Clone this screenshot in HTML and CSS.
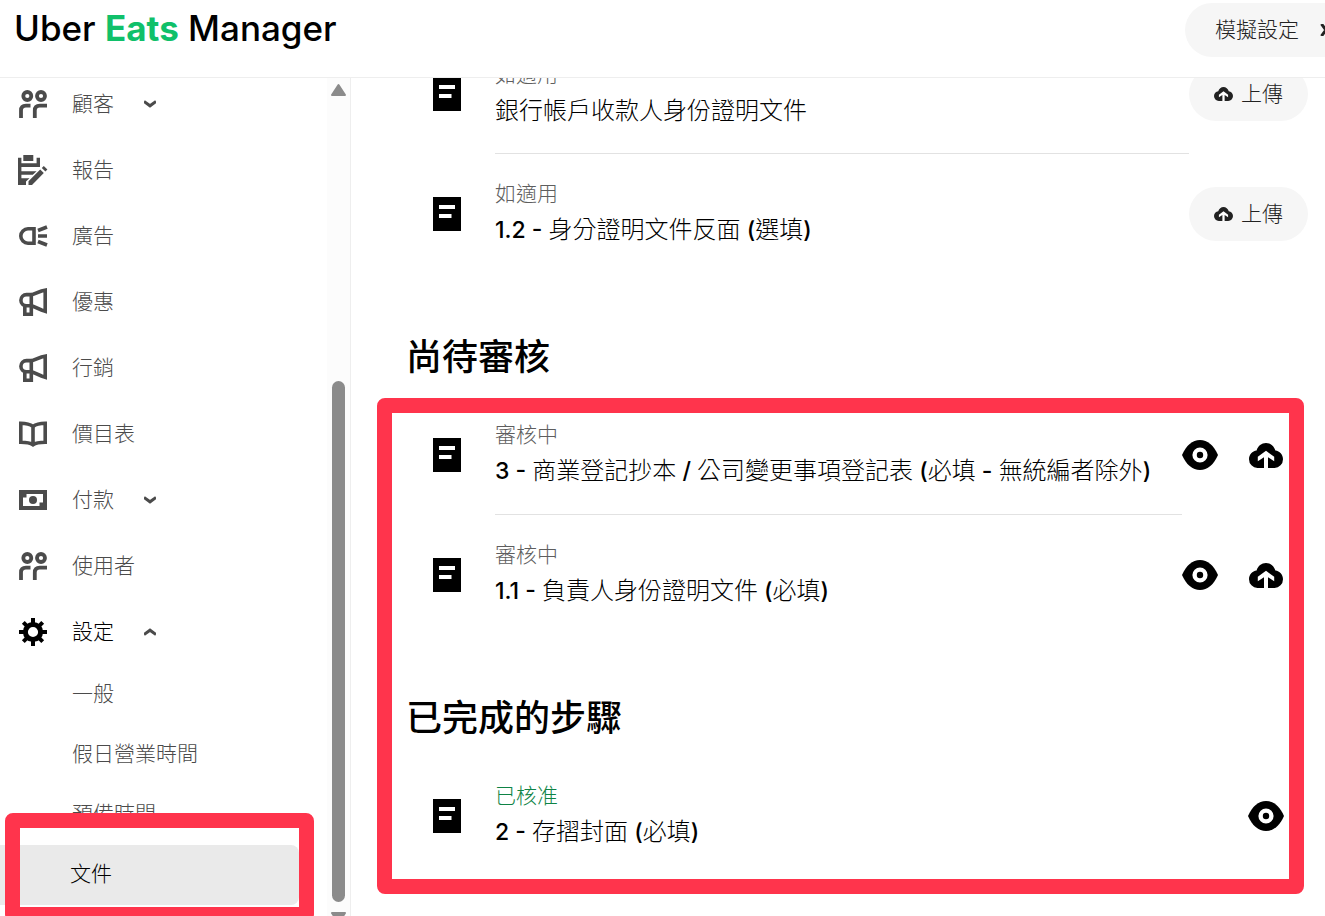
FILE: index.html
```html
<!DOCTYPE html>
<html lang="zh-Hant">
  <head>
    <meta charset="UTF-8" />
    <meta name="viewport" content="width=device-width, initial-scale=1.0" />
    <title>Uber Eats Manager</title>
    <link rel="stylesheet" href="styles.css">
  </head>
  <body>
    <!-- shared icons -->
    <svg class="sprite" aria-hidden="true">
      <symbol id="people" viewBox="0 0 28 28">
        <g fill="none" stroke="currentColor" stroke-width="3.8">
          <circle cx="8.3" cy="6" r="4" />
          <circle cx="22" cy="6" r="4" />
          <path d="M2 28v-7.5q0-4.8 5-4.8h4.5M15.8 28v-7.5q0-4.8 5-4.8H28" />
        </g>
      </symbol>
      <symbol id="megaphone" viewBox="0 0 28 28">
        <path fill="none" stroke="currentColor" stroke-width="3.6" d="M26.2 2.2v21L22.5 22 13 17.8H7.5a5.6 5.6 0 0 1 0-11.2H13L22.5 3zM12.3 6.6v19.6H5.8v-8.6" />
      </symbol>
      <symbol id="chevron" viewBox="0 0 12 8">
        <path fill="none" stroke="currentColor" stroke-width="3" d="M0 1.5l6 4.3 6-4.3" />
      </symbol>
      <symbol id="doc" viewBox="0 0 28 34">
        <path fill="currentColor" d="M0 0h28v34H0z" />
        <path fill="#fff" d="M6 8h16v4H6zM6 17h12.5v4H6z" />
      </symbol>
      <symbol id="eye" viewBox="0 0 36 30">
        <path fill="currentColor" d="M0 15C4 5.5 10.500 0 18 0s14 5.500 18 15c-4 9.500-10.500 15-18 15S4 24.500 0 15z" />
        <circle cx="18" cy="15" r="5.4" fill="none" stroke="#fff" stroke-width="4.400" />
      </symbol>
      <symbol id="cloud" viewBox="0 0 34 25">
        <path fill="currentColor" d="M8.500 25A8.800 8.800 0 0 1 0 16.200C0 11.500 3.400 8 7.600 7.400 9 3 12.600 0 17 0s8 3 9.400 7.400C30.600 8 34 11.500 34 16.200A8.800 8.800 0 0 1 25.500 25z" />
        <path class="cloud-arrow" d="M17 7.800l8.200 6v4.400L19 14.300V25h-4V14.300l-6.200 3.900v-4.400z" />
      </symbol>
    </svg>

    <header class="header">
      <a class="logo" href="#">Uber <b>Eats</b> Manager</a>
      <button class="simulate" type="button">
        <span>模擬設定</span>
        <svg class="chevron right"><use href="#chevron" /></svg>
      </button>
    </header>

    <div class="layout">
      <aside class="sidebar">
        <nav class="nav">
          <button class="nav-item" type="button">
            <svg class="nav-icon"><use href="#people" /></svg>
            <span>顧客</span>
            <svg class="chevron"><use href="#chevron" /></svg>
          </button>
          <a class="nav-item" href="#">
            <svg class="nav-icon" viewBox="0 0 28 28">
              <g fill="currentColor">
                <path d="M4.300-1h10v6h-10z" />
                <path d="M-1 1.700h3.400v5.600h15.200V1.700H21V11H2.400v4.200h15.200l-3.800 3.500H2.400v3.600h8.100L7 25.500V29h-8z" />
                <path d="M9.500 29v-3.800L21.200 13.500l3.600 3.600L13 29zM22.800 12l2-2 3.600 3.600-2 2z" />
              </g>
            </svg>
            <span>報告</span>
          </a>
          <a class="nav-item" href="#">
            <svg class="nav-icon" viewBox="0 0 28 28">
              <path fill="none" stroke="currentColor" stroke-width="3.600" d="M15 6.800v14.400H9A7.200 7.200 0 0 1 9 6.800zM19 8.500l9-3.500M19 14h9M19 19.500l9 3.500" />
            </svg>
            <span>廣告</span>
          </a>
          <a class="nav-item" href="#">
            <svg class="nav-icon"><use href="#megaphone" /></svg>
            <span>優惠</span>
          </a>
          <a class="nav-item" href="#">
            <svg class="nav-icon"><use href="#megaphone" /></svg>
            <span>行銷</span>
          </a>
          <a class="nav-item" href="#">
            <svg class="nav-icon" viewBox="0 0 28 28">
              <path fill="none" stroke="currentColor" stroke-width="3.600" d="M14 6.500C11 4.200 7 3.300 1.800 3.300v18.900c5.200 0 9.200.4 12.200 2.500 3-2.100 7-2.500 12.200-2.500V3.300C21 3.300 17 4.200 14 6.500zv18" />
            </svg>
            <span>價目表</span>
          </a>
          <button class="nav-item" type="button">
            <svg class="nav-icon" viewBox="0 0 28 28">
              <path fill="currentColor" fill-rule="evenodd" d="M0 4h28v20H0zM7.500 8v3.500H4V20h16.500v-3.500H24V8z" />
              <circle cx="14" cy="14" r="4" fill="currentColor" />
            </svg>
            <span>付款</span>
            <svg class="chevron"><use href="#chevron" /></svg>
          </button>
          <a class="nav-item" href="#">
            <svg class="nav-icon"><use href="#people" /></svg>
            <span>使用者</span>
          </a>
          <button class="nav-item open" type="button">
            <svg class="nav-icon" viewBox="0 0 28 28">
              <g fill="none" stroke="currentColor">
                <circle cx="14" cy="14" r="7.600" stroke-width="5" />
                <path stroke-width="4" d="M14 0v6M14 22v6M0 14h6M22 14h6M4.300 4.300l4 4M19.700 19.700l4 4M4.300 23.700l4-4M19.700 8.300l4-4" />
              </g>
            </svg>
            <span>設定</span>
            <svg class="chevron up"><use href="#chevron" /></svg>
          </button>
          <a class="sub-item" href="#">一般</a>
          <a class="sub-item" href="#">假日營業時間</a>
          <a class="sub-item" href="#">預備時間</a>
          <div class="marked">
            <a class="sub-item current" href="#">文件</a>
            <div class="frame nav-frame"></div>
          </div>
        </nav>
        <div class="scrollbar">
          <svg class="arrow" viewBox="0 0 15 12"><path d="M7.500 1L14 11H1z" /></svg>
          <div class="thumb"></div>
          <svg class="arrow" viewBox="0 0 15 12"><path d="M1 1h13L7.500 11z" /></svg>
        </div>
      </aside>

      <main class="content">
        <section class="first">
          <div class="row">
            <svg class="doc"><use href="#doc" /></svg>
            <div class="text line">
              <p class="status">如適用</p>
              <p class="title">銀行帳戶收款人身份證明文件</p>
            </div>
            <button class="upload" type="button"><svg><use href="#cloud" /></svg><span>上傳</span></button>
          </div>
          <div class="row">
            <svg class="doc"><use href="#doc" /></svg>
            <div class="text">
              <p class="status">如適用</p>
              <p class="title"><b>1.2 - </b>身分證明文件反面<b> (</b>選填<b>)</b></p>
            </div>
            <button class="upload" type="button"><svg><use href="#cloud" /></svg><span>上傳</span></button>
          </div>
        </section>

        <div class="marked">
          <section>
            <h2>尚待審核</h2>
            <div class="row">
              <svg class="doc"><use href="#doc" /></svg>
              <div class="text line">
                <p class="status">審核中</p>
                <p class="title"><b>3 - </b>商業登記抄本<b> / </b>公司變更事項登記表<b> (</b>必填<b> - </b>無統編者除外<b>)</b></p>
              </div>
              <div class="actions">
                <button type="button" aria-label="檢視"><svg class="eye"><use href="#eye" /></svg></button>
                <button type="button" aria-label="上傳"><svg class="cloud"><use href="#cloud" /></svg></button>
              </div>
            </div>
            <div class="row">
              <svg class="doc"><use href="#doc" /></svg>
              <div class="text">
                <p class="status">審核中</p>
                <p class="title"><b>1.1 - </b>負責人身份證明文件<b> (</b>必填<b>)</b></p>
              </div>
              <div class="actions">
                <button type="button" aria-label="檢視"><svg class="eye"><use href="#eye" /></svg></button>
                <button type="button" aria-label="上傳"><svg class="cloud"><use href="#cloud" /></svg></button>
              </div>
            </div>
          </section>
          <section>
            <h2>已完成的步驟</h2>
            <div class="row">
              <svg class="doc"><use href="#doc" /></svg>
              <div class="text">
                <p class="status approved">已核准</p>
                <p class="title"><b>2 - </b>存摺封面<b> (</b>必填<b>)</b></p>
              </div>
              <div class="actions">
                <button type="button" aria-label="檢視"><svg class="eye"><use href="#eye" /></svg></button>
              </div>
            </div>
          </section>
          <div class="frame list-frame"></div>
        </div>
      </main>
    </div>
  </body>
</html>
```
FILE: styles.css
```css
* {
  box-sizing: border-box;
  margin: 0;
  padding: 0;
}

body {
  display: flex;
  flex-direction: column;
  height: 100vh;
  overflow: hidden;
  background: #fff;
  color: #000;
  font-family: "Noto Sans CJK TC", sans-serif;
  font-size: 21px;
  font-weight: 300;
}

a {
  color: inherit;
  text-decoration: none;
}

button {
  border: none;
  background: none;
  color: inherit;
  font: inherit;
  cursor: pointer;
}

svg {
  display: block;
  flex: none;
  overflow: visible;
}

.sprite {
  position: absolute;
  width: 0;
  height: 0;
}

/* header */
.header {
  display: flex;
  flex: none;
  justify-content: space-between;
  height: 78px;
  padding: 3px 0 0 14px;
  border-bottom: 1px solid #eee;
  overflow: hidden;
}

.logo {
  font-family: Inter, sans-serif;
  font-size: 35px;
  font-weight: 500;
  line-height: 50px;
}

.logo b {
  color: #10c06a;
  font-weight: 700;
}

.simulate {
  display: flex;
  align-items: center;
  gap: 19px;
  height: 54px;
  margin-right: -35px;
  padding: 0 30px;
  border-radius: 27px;
  background: #f6f6f6;
  color: #222;
}

.simulate span,
.upload span,
.nav-item span {
  padding-bottom: 4px;
}

.chevron {
  width: 12px;
  height: 8px;
}

.chevron.up {
  transform: rotate(180deg);
}

.chevron.right {
  transform: rotate(-90deg);
}

.layout {
  display: flex;
  flex: 1;
  min-height: 0;
}

/* sidebar */
.sidebar {
  display: flex;
  flex: none;
  width: 351px;
  border-right: 1px solid #eee;
  overflow: hidden;
}

.nav {
  flex: 1;
  margin-top: -7px;
  color: #4b4b4b;
}

.nav-item {
  display: flex;
  align-items: center;
  width: 100%;
  height: 66px;
  padding-left: 19px;
}

.nav-item span {
  margin: 0 30px 0 25px;
}

.nav-item.open span,
.nav-item.open .nav-icon {
  color: #000;
}

.nav-icon {
  width: 28px;
  height: 28px;
}

.sub-item {
  display: block;
  height: 60px;
  padding-left: 72px;
  line-height: 55px;
}

.sub-item.current {
  margin-right: 28px;
  padding-left: 70px;
  border-radius: 0 8px 8px 0;
  background: #eaeaea;
  color: #000;
}

.scrollbar {
  display: flex;
  flex-direction: column;
  align-items: center;
  justify-content: space-between;
  width: 23px;
  height: 100vh;
  padding: 6px 0 70px;
  background: #fcfcfc;
}

.arrow {
  width: 15px;
  height: 12px;
  fill: #8b8b8b;
  stroke: #8b8b8b;
  stroke-linejoin: round;
  stroke-width: 2px;
}

.thumb {
  width: 13px;
  height: 62%;
  margin: auto 0 10px;
  border-radius: 7px;
  background: #8b8b8b;
}

/* red marker frames */
.marked {
  position: relative;
}

.frame {
  position: absolute;
  border: 15px solid #ff344c;
  border-radius: 8px;
  pointer-events: none;
}

.nav-frame {
  top: -32px;
  right: 13px;
  bottom: -17px;
  left: 5px;
}

.list-frame {
  top: 124px;
  right: 21px;
  bottom: -18px;
  left: 26px;
}

/* document list */
.content {
  flex: 1;
  min-width: 0;
  overflow: hidden;
}

.first {
  margin-top: -44px;
}

h2 {
  padding: 57px 0 18px 55px;
  font-size: 36px;
  font-weight: 500;
  line-height: 46px;
}

.row {
  display: flex;
  align-items: center;
  height: 120px;
  padding: 0 17px 0 82px;
}

.doc {
  width: 28px;
  height: 34px;
}

.text {
  display: flex;
  flex: 1;
  flex-direction: column;
  justify-content: center;
  min-width: 0;
  height: 100%;
  margin-left: 34px;
  padding-bottom: 2px;
  border-bottom: 1px solid transparent;
  white-space: nowrap;
}

.text.line {
  border-color: #e2e2e2;
}

.status {
  color: #5e5e5e;
  line-height: 32px;
}

.approved {
  color: #0e8345;
}

.title {
  font-size: 24px;
  line-height: 40px;
}

.title b {
  font-family: Inter, sans-serif;
  font-weight: 500;
  font-size: 23px;
}

.upload {
  display: flex;
  align-items: center;
  justify-content: center;
  gap: 8px;
  width: 119px;
  height: 54px;
  border-radius: 27px;
  background: #f6f6f6;
  color: #222;
}

.upload svg {
  width: 19px;
  height: 14px;
}

.cloud-arrow {
  fill: #fff;
}

.actions {
  display: flex;
  gap: 30px;
  padding-right: 24px;
}

.eye {
  width: 36px;
  height: 30px;
}

.cloud {
  width: 36px;
  height: 25px;
}
```
